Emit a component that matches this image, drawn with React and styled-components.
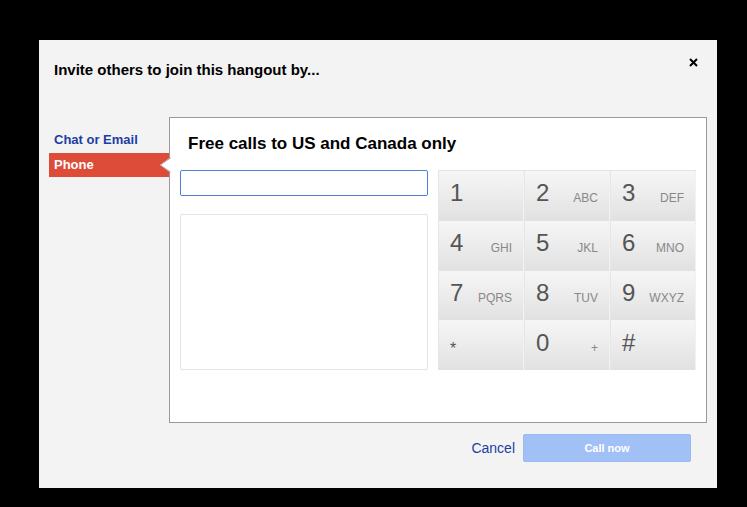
import React from "react"
import styled, { createGlobalStyle } from "styled-components"

const Global = createGlobalStyle`
  html, body {
    margin: 0;
    background: #000;
    font-family: Arial, "Liberation Sans", sans-serif;
  }
`

const keys = [
  ["1", ""],
  ["2", "ABC"],
  ["3", "DEF"],
  ["4", "GHI"],
  ["5", "JKL"],
  ["6", "MNO"],
  ["7", "PQRS"],
  ["8", "TUV"],
  ["9", "WXYZ"],
  ["*", ""],
  ["0", "+"],
  ["#", ""],
]

const App = () => {
  return (
    <>
      <Global />
      <Page>
        <Dialog>
          <Header>
            <Title>Invite others to join this hangout by...</Title>
            <Close>
              <svg width="9" height="9" viewBox="0 0 9 9">
                <path d="M1 1L8 8M8 1L1 8" stroke="#000" strokeWidth="2" />
              </svg>
            </Close>
          </Header>
          <Body>
            <Nav>
              <NavItem>Chat or Email</NavItem>
              <NavItem active>Phone</NavItem>
            </Nav>
            <Panel>
              <Notch />
              <PanelTitle>Free calls to US and Canada only</PanelTitle>
              <PanelRow>
                <LeftCol>
                  <NumberInput />
                  <Results />
                </LeftCol>
                <Keypad>
                  {keys.map(([digit, letters]) => (
                    <Key key={digit}>
                      <Digit small={digit === "*"}>{digit}</Digit>
                      <Letters>{letters}</Letters>
                    </Key>
                  ))}
                </Keypad>
              </PanelRow>
            </Panel>
          </Body>
          <Footer>
            <Cancel>Cancel</Cancel>
            <CallButton>Call now</CallButton>
          </Footer>
        </Dialog>
      </Page>
    </>
  )
}

export default App

const Page = styled.div`
  width: 747px;
  height: 507px;
  padding: 40px 0 0 39px;
  box-sizing: border-box;
`

const Dialog = styled.div`
  width: 678px;
  height: 448px;
  background: #f3f3f3;
  display: flex;
  flex-direction: column;
`

const Header = styled.div`
  display: flex;
  justify-content: space-between;
  align-items: flex-start;
  padding: 20px 19px 0 15px;
  height: 56px;
  box-sizing: border-box;
`

const Title = styled.div`
  font-size: 15px;
  font-weight: bold;
  color: #000;
  line-height: 20px;
`

const Close = styled.div`
  width: 9px;
  height: 9px;
  margin-top: -2px;
  transform: translateY(-5px);
  cursor: pointer;
`

const Body = styled.div`
  display: flex;
  padding: 21px 10px 0 10px;
`

const Nav = styled.div`
  width: 120px;
  padding-top: 11px;
  display: flex;
  flex-direction: column;
`

const NavItem = styled.div`
  height: 24px;
  line-height: 24px;
  padding-left: 5px;
  font-size: 13px;
  font-weight: bold;
  color: ${({ active }) => (active ? "#fff" : "#1c3ea3")};
  background: ${({ active }) => (active ? "#dd4b39" : "transparent")};
  margin-top: ${({ active }) => (active ? "1px" : "0")};
`

const Panel = styled.div`
  position: relative;
  width: 538px;
  height: 306px;
  box-sizing: border-box;
  background: #fff;
  border: 1px solid #999;
  padding: 0 10px 0 10px;
`

const Notch = styled.div`
  position: absolute;
  left: -10px;
  top: 39px;
  width: 11px;
  height: 16px;
  background: #fff;
  clip-path: polygon(0 50%, 100% 0, 100% 100%);
  &::before {
    content: "";
    position: absolute;
    inset: 0;
    background: #999;
    clip-path: polygon(0 50%, 100% 0, 100% 6%, 9% 50%, 100% 94%, 100% 100%);
  }
`

const PanelTitle = styled.div`
  font-size: 17px;
  font-weight: bold;
  color: #000;
  padding: 16px 0 0 8px;
  height: 35px;
  line-height: 20px;
  box-sizing: border-box;
`

const PanelRow = styled.div`
  display: flex;
  gap: 10px;
  margin-top: 17px;
`

const LeftCol = styled.div`
  display: flex;
  flex-direction: column;
  gap: 18px;
  width: 248px;
`

const NumberInput = styled.input`
  width: 248px;
  height: 26px;
  box-sizing: border-box;
  border: 1px solid #4d7fd4;
  border-radius: 2px;
  outline: none;
  margin: 0;
  padding: 0 6px;
  font-size: 13px;
`

const Results = styled.div`
  height: 156px;
  box-sizing: border-box;
  border: 1px solid #e4e4e4;
  border-radius: 2px;
`

const Keypad = styled.div`
  width: 258px;
  height: 200px;
  display: grid;
  grid-template-columns: repeat(3, 1fr);
  grid-template-rows: repeat(4, 1fr);
  border-top: 1px solid #e4e4e4;
  box-sizing: border-box;
  background: #eaeaea;
`

const Key = styled.div`
  display: flex;
  justify-content: space-between;
  align-items: center;
  padding: 0 11px 0 11px;
  background: linear-gradient(#f6f6f6, #e1e1e1);
  border-left: 1px solid #e6e6e6;
  border-right: 1px solid #f2f2f2;
  cursor: pointer;
`

const Digit = styled.span`
  font-size: ${({ small }) => (small ? "16px" : "24px")};
  color: #555;
  margin-top: ${({ small }) => (small ? "8px" : "-5px")};
`

const Letters = styled.span`
  font-size: 12px;
  color: #888;
  margin-top: 5px;
`

const Footer = styled.div`
  display: flex;
  justify-content: flex-end;
  align-items: center;
  gap: 8px;
  padding: 11px 26px 0 0;
`

const Cancel = styled.span`
  font-size: 14px;
  color: #1c3ea3;
  cursor: pointer;
`

const CallButton = styled.button`
  width: 168px;
  height: 28px;
  border: 1px solid #9ab9f2;
  border-radius: 2px;
  background: #a1c1f6;
  color: #fff;
  font-family: Arial, "Liberation Sans", sans-serif;
  font-size: 11px;
  font-weight: bold;
`
